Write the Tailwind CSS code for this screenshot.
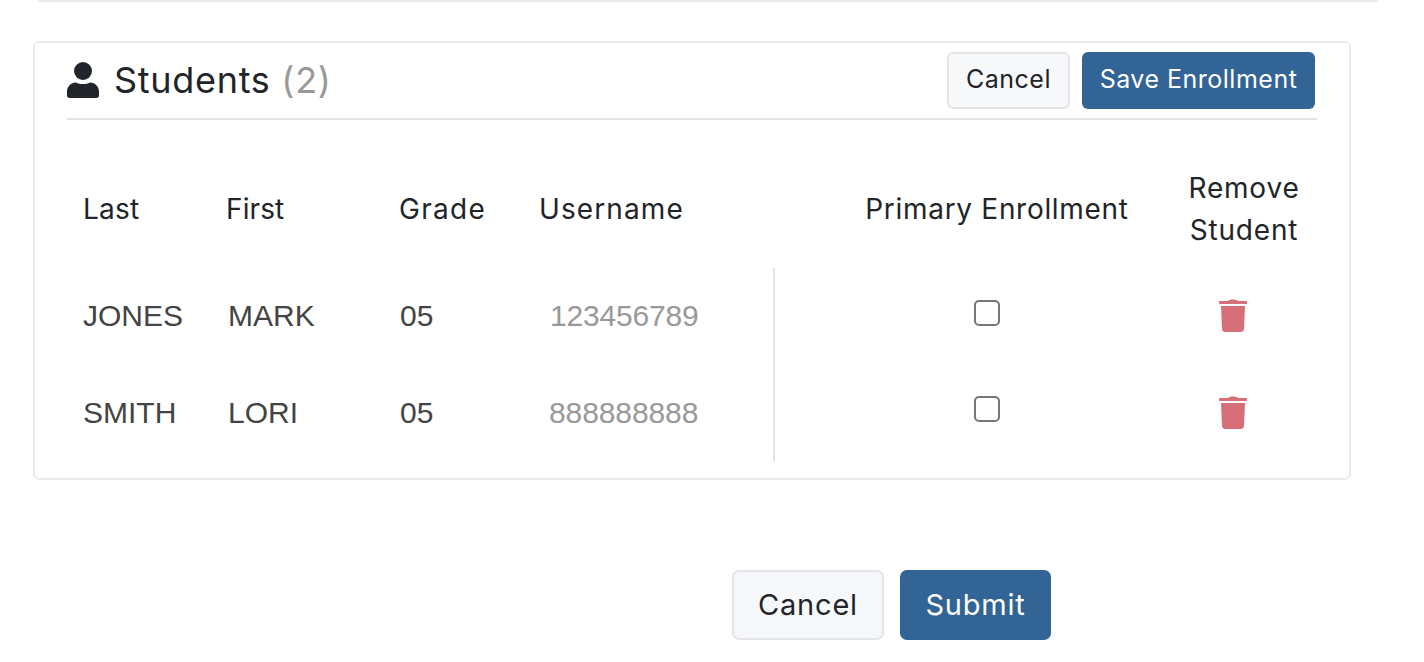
<!DOCTYPE html>
<html lang="en">
<head>
  <meta charset="UTF-8">
  <meta name="viewport" content="width=device-width, initial-scale=1.0">
  <title>Students</title>
  <script src="https://cdn.jsdelivr.net/npm/@tailwindcss/browser@4"></script>
</head>
<body class="bg-white font-['Inter',sans-serif] text-[#212529] overflow-hidden">

<div class="w-[1424px] h-[662px] pl-[33px]">
  <!-- bottom edge of the card above -->
  <div class="ml-[5px] w-[1340px] h-[2px] bg-[#e9e9ee] rounded-b"></div>

  <!-- Students card -->
  <div class="mt-[39px] w-[1318px] h-[439px] border-2 border-[#ebebef] rounded-[6px] px-[32px]">
    <div class="w-[1250px] h-[77px] border-b-2 border-[#e4e4e7] flex items-start justify-between">
      <h2 class="flex items-center gap-[15px] h-[74px] text-[36px] leading-none tracking-[0.7px]">
        <svg class="w-[32px] h-[36px]" viewBox="0 0 32 36" fill="#212529"><circle cx="16" cy="9" r="9"/><path d="M9 20.5c2 1 4.400 1.500 7 1.500s5-.5 7-1.500c5 0 9 4 9 9v4c0 1.400-1.100 2.500-2.500 2.500h-27C1.100 36 0 34.900 0 33.500v-4c0-5 4-9 9-9z"/></svg>
        <span>Students <span class="text-[#999999]">(2)</span></span>
      </h2>
      <div class="flex gap-[12px] mt-[9px] mr-[2px]">
        <button class="w-[123px] h-[57px] pb-[2px] bg-[#f7f8fa] border-2 border-[#e3e5e9] rounded-[6px] text-[25px] tracking-[0.5px]">Cancel</button>
        <button class="w-[233px] h-[57px] pb-[2px] bg-[#326496] text-white rounded-[6px] text-[25px] tracking-[0.5px]">Save Enrollment</button>
      </div>
    </div>

    <!-- table header -->
    <div class="grid grid-cols-[143px_173px_140px_296px_324px_1fr] h-[148px] pt-[30px] pl-[16px] items-center text-[28px] leading-[42px] tracking-[0.8px]">
      <div class="tracking-[0.2px]">Last</div>
      <div class="tracking-[0.1px]">First</div>
      <div class="tracking-[1.3px]">Grade</div>
      <div class="tracking-[1.1px]">Username</div>
      <div class="text-center whitespace-nowrap tracking-[0.7px]">Primary Enrollment</div>
      <div class="text-center pl-[12px]">Remove<br>Student</div>
    </div>

    <!-- rows -->
    <div class="font-['Liberation_Sans',sans-serif] text-[#444444] text-[30px]">
      <div class="grid grid-cols-[145px_171px_150px_224px_1fr_168px] h-[97px] pl-[16px] items-center">
        <div class="pb-[2px]">JONES</div>
        <div class="pb-[2px]">MARK</div>
        <div class="pb-[2px] pl-[1px]">05</div>
        <div class="pb-[2px] pl-[1px] text-[#999999] tracking-[-0.2px]">123456789</div>
        <div class="h-full border-l-2 border-[#e4e4e7] flex justify-center pl-[50px]"><span class="w-[26px] h-[26px] border-2 border-[#777777] rounded-[5px] mt-[32px]"></span></div>
        <div class="flex justify-center pb-[2px]">
          <svg class="w-[28px] h-[33px]" viewBox="0 0 28 33" fill="#d66f78"><path d="M9 2c1-2 9-2 10 0h8c.6 0 1 .4 1 1v1c0 .6-.4 1-1 1H1C.4 5 0 4.600 0 4V3c0-.6.4-1 1-1z"/><path d="M2 7h24l-1 23c-.1 1.600-1.400 3-3 3H6c-1.600 0-2.900-1.400-3-3z"/></svg>
        </div>
      </div>
      <div class="grid grid-cols-[145px_171px_150px_224px_1fr_168px] h-[97px] pl-[16px] items-center">
        <div class="pb-[2px]">SMITH</div>
        <div class="pb-[2px]">LORI</div>
        <div class="pb-[2px] pl-[1px]">05</div>
        <div class="pb-[2px] text-[#999999] tracking-[-0.1px]">888888888</div>
        <div class="h-full border-l-2 border-[#e4e4e7] flex justify-center pl-[50px]"><span class="w-[26px] h-[26px] border-2 border-[#777777] rounded-[5px] mt-[31px]"></span></div>
        <div class="flex justify-center pb-[2px]">
          <svg class="w-[28px] h-[33px]" viewBox="0 0 28 33" fill="#d66f78"><path d="M9 2c1-2 9-2 10 0h8c.6 0 1 .4 1 1v1c0 .6-.4 1-1 1H1C.4 5 0 4.600 0 4V3c0-.6.4-1 1-1z"/><path d="M2 7h24l-1 23c-.1 1.600-1.400 3-3 3H6c-1.600 0-2.900-1.400-3-3z"/></svg>
        </div>
      </div>
    </div>
  </div>

  <!-- form actions -->
  <div class="flex gap-[16px] mt-[90px] ml-[699px]">
    <button class="w-[152px] h-[70px] bg-[#f7f8fa] border-2 border-[#e3e5e9] rounded-[7px] text-[29px] tracking-[0.8px]">Cancel</button>
    <button class="w-[151px] h-[70px] bg-[#326496] text-white rounded-[7px] text-[29px] tracking-[0.8px]">Submit</button>
  </div>
</div>

</body>
</html>
